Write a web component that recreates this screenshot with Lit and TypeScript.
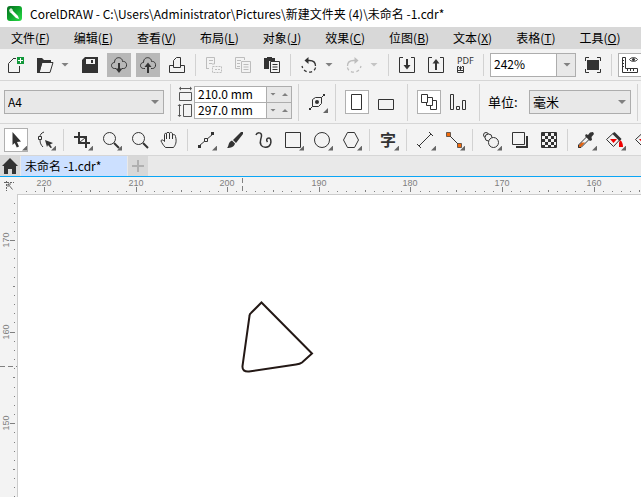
import { LitElement, html, svg, css, nothing, SVGTemplateResult } from "lit";
import { customElement, property, state } from "lit/decorators.js";
import { classMap } from "lit/directives/class-map.js";

const icons: Record<string, SVGTemplateResult> = {
  fresh: svg`<path class="s" d="M9 5.500H12M15.500 13V19.500H4.500V10.500L9.500 5.500"/><rect x="13" y="4" width="7" height="7" fill="#12983a"/><path d="M16.500 5v5M14 7.500h5" stroke="#fff" fill="none"/>`,
  open: svg`<path class="s" d="M6 19.500L9 9.500H20L17 19.500z"/><path class="f" d="M4 5h5l2 2h7v3H9L6.500 20H4z"/>`,
  save: svg`<path class="f" d="M7 4H20V20H4V7z"/><path fill="#f3f3f3" d="M8 6h9v5H8z"/><path class="f" d="M13 7h2v3h-2z"/>`,
  cloudDown: svg`<path class="s" d="M9 15.500H7.500C3.500 15.500 3.500 9.500 7.500 9.500C7.500 3 15.500 3.500 15.500 8.500C20.500 7.500 21 15.500 16.500 15.500H15"/><path class="s w" d="M12 10v8"/><path class="f" d="M8.500 15.500h7L12 20z"/>`,
  cloudUp: svg`<path class="s" d="M9 15.500H7.500C3.500 15.500 3.500 9.500 7.500 9.500C7.500 3 15.500 3.500 15.500 8.500C20.500 7.500 21 15.500 16.500 15.500H15"/><path class="s w" d="M12 13v7"/><path class="f" d="M8.500 14h7L12 9.500z"/>`,
  print: svg`<path class="s" d="M8.500 14.500V7.500L11.500 4.500H15.500V14.500M8.500 12.500H4.500V19.500H19.500V12.500H15.500M8.500 14.500H15.500"/>`,
  cut: svg`<path class="s" d="M4.500 15V4.500H12.500V11H10M7 7.500h4M7 10.500h3M4 15.500h3"/><path class="s" stroke-dasharray="2 1" d="M10.500 13.500H19.500V19.500H10.500zM13 16.500h5"/>`,
  copy: svg`<path class="s" d="M9 15.500H4.500V4.500H13.500V7M6 7.500h4M6 10.500h3M6 13.500h3M10.500 8.500H19.500V19.500H10.500zM12.500 11.500h5M12.500 14h5M12.500 16.500h5"/>`,
  paste: svg`<path class="f" d="M4 5h3V4h5v1h3v3H9v8H4z"/><path class="s" d="M10.500 8.500H19.500V19.500H10.500zM12.500 11.500h5M12.500 14h5M12.500 16.500h5"/>`,
  undo: svg`<path class="s" stroke-width="1.300" d="M9 7.500H12.500C16.500 7.500 18.500 10 18.500 13"/><path class="s" stroke-width="1.300" stroke-dasharray="3 2.500" d="M18.500 14.500C17.500 20.500 7 21.500 5 13"/><path class="f" d="M11.500 4V11L7.500 7.500z"/>`,
  redo: svg`<path class="s" stroke-width="1.300" d="M15 7.500H11.500C7.500 7.500 5.500 10 5.500 13"/><path class="s" stroke-width="1.300" stroke-dasharray="3 2.500" d="M5.500 14.500C6.500 20.500 17 21.500 19 13"/><path class="f" d="M12.500 4V11L16.500 7.500z"/>`,
  bringIn: svg`<path class="s" d="M8 4.500H4.500V19.500H8M16 4.500H19.500V19.500H16M8 19.500H16"/><path class="s w" d="M12 6v8"/><path class="f" d="M8.500 12h7L12 16.500z"/>`,
  sendOut: svg`<path class="s" d="M8 4.500H4.500V19.500H8M16 4.500H19.500V19.500H16M8 19.500H16"/><path class="s w" d="M12 9v8"/><path class="f" d="M8.500 10.500h7L12 6z"/>`,
  pdf: svg`<text class="label" x="4" y="11">PDF</text><path class="s" d="M6 13.500H4.500V19.500H10.500V13.500H9M7.500 14v4M5 17.500h5"/><path class="f" d="M5.500 15.500h4L7.500 13z"/>`,
  full: svg`<path class="f" d="M6 7h12v10H6z"/><path class="s" d="M4.500 8V4.500H8M16 4.500H19.500V8M19.500 16V19.500H16M8 19.500H4.500V16"/>`,
  rulers: svg`<path class="s" d="M4.500 4.500H7.500V15.500H19.500V19.500H4.500zM5 7.500h1M5 10.500h1M5 13.500h1M9.500 18v-2M12.500 18v-2M15.500 18v-2"/><path class="s" d="M11.500 6.500C13 4 18 4 19.500 6.500C18 9 13 9 11.500 6.500z"/><circle class="f" cx="15.500" cy="6.500" r="1.500"/>`,
  nib: svg`<path class="s" d="M4 20L7.500 16.500V9.500L10.500 7.500H16.500V13.500L13.500 16.500H7.500M16.500 7.500L20 4"/><circle class="f" cx="12" cy="12" r="2"/><path class="f" d="M4 18h2v2H4zM18 4h2v2h-2z"/>`,
  portrait: svg`<path class="s" d="M6.500 4.500H16.500V19.500H6.500z"/>`,
  landscape: svg`<path class="s" d="M4.500 9.500H19.500V19.500H4.500z"/>`,
  pages: svg`<path class="s" d="M4.500 4.500H10.500V12.500H4.500zM10.500 7.500H15.500V15.500H9.500V12.500M15.500 10.500H19.500V19.500H13.500V15.500"/>`,
  align: svg`<path class="s" d="M4.500 4.500H7.500V19.500H4.500zM10.500 16.500H13.500V19.500H10.500zM16.500 10.500H19.500V19.500H16.500z"/>`,
  pick: svg`<path class="f" d="M8.500 4L17 13.500L13 14L15 18.500L12.800 19.500L10.700 15L8.500 17z"/>`,
  shape: svg`<path class="s" d="M11 4C8 5 7 7 7 9M7 12C7 15 8 17 10 19"/><path class="s" d="M5.500 8.500h3v3h-3z"/><path class="f" d="M12 12L20 15L17 16.500L19 19.500L17.500 20L15 17L14 19z"/>`,
  crop: svg`<path class="s w" d="M9 4V15H20M4 9H16V20"/><path class="s" d="M9.500 14.500L15.500 9.500"/>`,
  zoom: svg`<circle class="s" cx="10.500" cy="10.500" r="6"/><path class="s w" d="M15 15L20 20"/>`,
  hand: svg`<path class="s" d="M8.500 19.500C6 17 5 15 4 13C4 11.500 6 11.500 7.500 13.500V6.500C7.500 5 9.500 5 9.500 6.500V11V5.500C9.500 4 12.500 4 12.500 5.500V11V5.500C12.500 4 15.500 4 15.500 6V11V8C15.500 6 18.500 6 18.500 8.500C20 14 18.500 17 16.500 19.500z"/>`,
  line: svg`<path class="s" d="M5 18L19 6"/><path class="f" d="M4 17h3v3H4zM17 4h3v3h-3z"/><path class="s paper" d="M10.500 10.500h3v3h-3z"/>`,
  brush: svg`<path class="f" d="M18 4L20 4V6L13 15L10 12zM9 12.500L12 15.500C11 19 8 20 4 20C6 18 5 14 9 12.500z"/>`,
  curl: svg`<path class="s" stroke-width="1.500" d="M4 7C5 4 10 4 9.500 8C9 12 7 14 9 17C11 20.500 17 20 18.500 16C19.500 12.500 18.500 10 17 10C14.500 10 14 12 15.500 14"/>`,
  rect: svg`<path class="s" d="M4.500 4.500H19.500V19.500H4.500z"/>`,
  circle: svg`<circle class="s" cx="12" cy="12" r="7.500"/>`,
  hexagon: svg`<path class="s" d="M8.500 4.500H15.500L19.500 12L15.500 19.500H8.500L4.500 12z"/>`,
  type: svg`<text class="glyph" x="4" y="18">字</text>`,
  dimension: svg`<path class="s" d="M6 18L18 6M4 16L8 20M16 4L20 8"/>`,
  connector: svg`<path class="s" d="M6 6L18 18"/><path fill="#f26a0a" stroke="#333" stroke-width=".7" d="M4.500 4.500h4v4h-4zM15.500 15.500h4v4h-4z"/>`,
  blend: svg`<circle class="s" cx="7" cy="7" r="2.500"/><circle class="s paper" cx="9.500" cy="9.500" r="3.500"/><circle class="s paper" cx="14.500" cy="14.500" r="5"/>`,
  shadow: svg`<path class="f" d="M18 8h2v12H8v-2h10z"/><path class="s" d="M4.500 4.500H16.500V16.500H4.500z"/>`,
  checks: svg`<path class="s" d="M4.500 4.500H19.500V19.500H4.500z"/><path class="f" d="M5 5h3v3H5zM11 5h3v3h-3zM17 5h2v3h-2zM8 8h3v3H8zM14 8h3v3h-3zM5 11h3v3H5zM11 11h3v3h-3zM17 11h2v3h-2zM8 14h3v3H8zM14 14h3v3h-3zM5 17h3v2H5zM11 17h3v2h-3zM17 17h2v2h-2z"/>`,
  dropper: svg`<path fill="#e36312" d="M4 18L7.500 14.500H11L6 20H4z"/><path class="s" d="M13 8.500L4.500 17V19.500H7L15.500 11"/><path class="f" d="M12 6L14 7L16 4.500L19 4L20 6L17.500 9L18 12L16 13L11 8z"/>`,
  fill: svg`<path class="s" d="M3.500 11.500L10.500 5L17 11.500L10.500 18.500z"/><path fill="#f00000" d="M7 11h7L10.500 15z"/><path class="s" stroke-width="3" d="M10.500 5L17.500 12"/><path fill="#f00000" d="M17 12Q20 14 20 19H16V15z"/>`,
};

@customElement("draw-icon")
class DrawIcon extends LitElement {
  @property() name = "";
  static styles = css`
    :host { display: block; width: 24px; height: 24px; }
    svg { display: block; }
    .s { stroke: currentColor; fill: none; }
    .paper { fill: #f3f3f3; }
    .w { stroke-width: 2; }
    .f { fill: currentColor; }
    .label { font: 9px "Noto Sans", sans-serif; fill: currentColor; }
    .glyph { font: 700 16px "Noto Sans CJK SC", sans-serif; fill: currentColor; }
  `;
  render() {
    return html`<svg width="24" height="24" viewBox="0 0 24 24" aria-hidden="true">${icons[this.name] ?? nothing}</svg>`;
  }
}

@customElement("tool-button")
class ToolButton extends LitElement {
  @property() icon = "";
  @property() label = "";
  @property() look = "";
  @property({ type: Boolean }) flyout = false;
  @property({ type: Boolean }) off = false;
  static styles = css`
    :host { display: block; flex: none; }
    button {
      display: block; position: relative; width: 24px; height: 24px; padding: 0;
      border: 0; background: none; color: #333;
    }
    button.pressed { background: #b8b8b8; }
    button.boxed { background: #fff; box-shadow: inset 0 0 0 1px #b0b0b0; }
    button:disabled { color: #bdbdbd; }
    .corner {
      position: absolute; right: 1px; bottom: 1px; width: 5px; height: 5px;
      background: #666; clip-path: polygon(100% 0, 100% 100%, 0 100%);
    }
  `;
  render() {
    return html`<button
      class=${classMap({ pressed: this.look === "pressed", boxed: this.look === "boxed" })}
      aria-label=${this.label} ?disabled=${this.off}
    ><draw-icon name=${this.icon}></draw-icon>${this.flyout ? html`<span class="corner"></span>` : nothing}</button>`;
  }
}

const STEP = 9.16; // screen pixels per millimetre at this zoom level

@customElement("page-ruler")
class PageRuler extends LitElement {
  @property({ type: Boolean }) vertical = false;
  @property({ type: Number }) first = 0; // value of the first major mark
  @property({ type: Number }) start = 0; // where that mark falls
  @property({ type: Number }) pointer = 0;
  @state() private extent = 0;

  private watcher = new ResizeObserver(([entry]) => {
    this.extent = this.vertical ? entry.contentRect.height : entry.contentRect.width;
  });

  static styles = css`
    :host { display: block; overflow: hidden; min-width: 0; min-height: 0; position: relative; background: #f3f3f3; }
    svg { position: absolute; inset: 0; width: 100%; height: 100%; }
    text { font: 9px "Liberation Sans", sans-serif; fill: #808080; text-anchor: middle; }
    rect { fill: #808080; }
    path { stroke: #808080; }
  `;

  connectedCallback() {
    super.connectedCallback();
    this.watcher.observe(this);
  }
  disconnectedCallback() {
    this.watcher.disconnect();
    super.disconnectedCallback();
  }

  render() {
    const marks: SVGTemplateResult[] = [];
    const v = this.vertical;
    const base = 15;
    for (let i = -10; ; i++) {
      const p = Math.round(this.start + i * STEP);
      if (p >= this.extent) break;
      if (p < 8) continue;
      const len = i % 10 === 0 ? 5 : i % 5 === 0 ? 2 : 1;
      marks.push(v
        ? svg`<rect x=${base - len} y=${p} width=${len} height="1"/>`
        : svg`<rect x=${p} y=${base - len} width="1" height=${len}/>`);
      if (i % 10 === 0 && p > 10 && p + 10 < this.extent) {
        const n = this.first - i;
        marks.push(v
          ? svg`<text transform=${`translate(9 ${p}) rotate(-90)`}>${n}</text>`
          : svg`<text x=${p} y="9">${n}</text>`);
      }
    }
    const d = v ? `M0 ${this.pointer}.5H18` : `M${this.pointer}.5 1V18`;
    return html`<svg>${marks}${svg`<path stroke-dasharray="5 3" d=${d}/>`}</svg>`;
  }
}

const menus = [["文件", "F"], ["编辑", "E"], ["查看", "V"], ["布局", "L"], ["对象", "J"], ["效果", "C"], ["位图", "B"], ["文本", "X"], ["表格", "T"], ["工具", "O"]];

type Tool = [icon: string, label: string, flyout?: boolean] | null;
const tools: Tool[] = [
  ["shape", "形状", true], null,
  ["crop", "裁剪", true], ["zoom", "缩放", true], ["zoom", "查找"], ["hand", "平移"], null,
  ["line", "折线", true], ["brush", "艺术笔"], ["curl", "手绘"], ["rect", "矩形", true], ["circle", "椭圆形", true], ["hexagon", "多边形", true], null,
  ["type", "文本", true], null,
  ["dimension", "度量", true], ["connector", "连接器", true], null,
  ["blend", "混合", true], ["shadow", "阴影"], ["checks", "透明度"], null,
  ["dropper", "滴管", true], ["fill", "填充", true], ["fill", "智能填充"],
];

@customElement("app-root")
class AppRoot extends LitElement {
  static styles = css`
    :host {
      display: flex; flex-direction: column; min-height: 100vh; overflow: hidden;
      background: #fff; color: #000;
      font: 12px "Noto Sans CJK SC", "Noto Sans", sans-serif;
    }
    button, input, select { font: inherit; color: inherit; margin: 0; border: 0; border-radius: 0; }
    .title { display: flex; align-items: center; gap: 8px; height: 27px; padding-left: 7px; white-space: nowrap; }
    h1 { margin: 0; font-size: 12px; font-weight: 400; }
    .menu { display: flex; height: 22px; background: #d8d8d8; }
    .menu button { flex: none; padding: 0 13px 2px 11px; text-align: left; background: none; white-space: nowrap; }
    .bar { display: flex; align-items: center; gap: 5px; padding-left: 4px; background: #f3f3f3; border-bottom: 1px solid #d6d6d6; overflow: hidden; }
    .std { height: 31px; }
    .props { height: 42px; }
    .tools { height: 31px; }
    .sep { flex: none; width: 1px; height: 22px; margin: 0 1px; background: #d2d2d2; }
    .props .sep { height: 37px; }
    .split { display: flex; flex: none; }
    .more { width: 16px; height: 24px; padding: 0; background: none; display: grid; place-items: center; }
    .tri { width: 8px; height: 4px; background: #808080; clip-path: polygon(0 0, 100% 0, 50% 100%); }
    .more:disabled .tri { background: #c4c4c4; }
    .combo { position: relative; flex: none; height: 24px; box-sizing: border-box; border: 1px solid #adadad; background: #e8e8e8; }
    .combo select { appearance: none; display: block; width: 100%; height: 22px; padding: 0 20px 2px 3px; background: none; outline: 0; }
    .combo .tri { position: absolute; right: 4px; top: 9px; pointer-events: none; }
    .paper { width: 160px; }
    .units { width: 102px; }
    .units select, .unit-label { font-size: 13px; }
    .level { width: 86px; background: linear-gradient(to left, #e8e8e8 18px, #adadad 18px, #adadad 19px, #fff 19px); }
    .size { display: flex; gap: 1px; flex: none; }
    .size svg { display: block; }
    .fields { display: grid; grid-template-columns: 72px 12px 12px; grid-auto-rows: 15px; gap: 1px 0; padding: 1px; background: #adadad; }
    .fields input { width: 71px; height: 15px; padding: 0 0 1px 3px; box-sizing: border-box; background: #fff; }
    .fields button { padding: 0; background: #e8e8e8; display: grid; place-items: center; }
    .fields .tri { width: 6px; height: 3px; }
    .up { transform: rotate(180deg); }
    .pair { display: flex; gap: 5px; padding: 0 3px; flex: none; }
    .unit-label { width: 36px; padding: 0 0 2px 2px; flex: none; white-space: nowrap; }
    .tabs { display: flex; gap: 1px; height: 20px; background: #e9e9e9; border-bottom: 1px solid #0aa5f5; }
    .tabs button { padding: 0; background: #d8d8d8; }
    .tabs .home { width: 20px; display: grid; place-items: center; color: #333; }
    .tabs .doc { width: 106px; padding: 0 0 2px 4px; text-align: left; background: #cce0ff; white-space: nowrap; }
    .tabs .add { width: 20px; display: grid; place-items: center; }
    .work { flex: 1; display: grid; grid-template: 17px 1fr / 17px 1fr; background: #f3f3f3; }
    .origin { display: block; padding: 0; background: none; }
    .canvas { background: #fff; border: solid #ccc; border-width: 1px 0 0 1px; margin: 0; overflow: hidden; }
    .canvas svg { display: block; }
  `;

  sep() { return html`<span class="sep"></span>`; }
  more(label: string, off = false) {
    return html`<button class="more" aria-label=${label} ?disabled=${off}><span class="tri"></span></button>`;
  }
  tool(icon: string, label: string, look = "", flyout = false, off = false) {
    return html`<tool-button icon=${icon} label=${label} look=${look} ?flyout=${flyout} ?off=${off}></tool-button>`;
  }
  size(label: string, value: string) {
    return html`<input aria-label=${label} .value=${value}>
      <button aria-label="减小${label}"><span class="tri"></span></button>
      <button aria-label="增大${label}"><span class="tri up"></span></button>`;
  }

  render() {
    return html`
      <header class="title">
        <svg width="15" height="15" viewBox="0 0 15 15" aria-hidden="true">
          <defs><linearGradient id="g" x2="1" y2="1"><stop stop-color="#086b20"/><stop offset=".5" stop-color="#0ea52c"/><stop offset="1" stop-color="#2be04a"/></linearGradient></defs>
          <rect width="15" height="15" rx="3" fill="url(#g)"/>
          <path d="M5 4L11 10L12 13L9 12L3 6z" fill="#fff"/><path d="M2 4L4 2L6 4L3 7z" fill="#d5ecd5"/>
        </svg>
        <h1>CorelDRAW - C:\\Users\\Administrator\\Pictures\\新建文件夹 (4)\\未命名 -1.cdr*</h1>
      </header>
      <nav class="menu">${menus.map(([name, key]) => html`<button>${name}(<u>${key}</u>)</button>`)}</nav>

      <div class="bar std">
        ${this.tool("fresh", "新建")}
        <span class="split">${this.tool("open", "打开")}${this.more("最近打开")}</span>
        ${this.tool("save", "保存")}
        ${this.tool("cloudDown", "从云打开", "pressed")}
        ${this.tool("cloudUp", "保存到云", "pressed")}
        ${this.tool("print", "打印")}
        ${this.sep()}
        ${this.tool("cut", "剪切", "", false, true)}
        ${this.tool("copy", "复制", "", false, true)}
        ${this.tool("paste", "粘贴")}
        ${this.sep()}
        <span class="split">${this.tool("undo", "撤消")}${this.more("撤消列表")}</span>
        <span class="split">${this.tool("redo", "重做", "", false, true)}${this.more("重做列表", true)}</span>
        ${this.sep()}
        ${this.tool("bringIn", "导入")}
        ${this.tool("sendOut", "导出")}
        ${this.tool("pdf", "发布为 PDF")}
        ${this.sep()}
        <span class="combo level"><select aria-label="缩放级别"><option>242%</option></select><span class="tri"></span></span>
        ${this.tool("full", "全屏预览")}
        ${this.sep()}
        ${this.tool("rulers", "显示标尺", "boxed")}
      </div>

      <div class="bar props">
        <span class="combo paper"><select aria-label="页面大小"><option>A4</option></select><span class="tri"></span></span>
        ${this.sep()}
        <div class="size">
          <svg width="16" height="33" viewBox="0 0 16 33" fill="none" stroke="#555" aria-hidden="true">
            <path d="M2.500 6.500H14.500V14.500H2.500zM6.500 18.500H14.500V30.500H6.500zM3 2.500H14M2.500 20V30"/>
            <path d="M2 2.500l2-2v4zM15 2.500l-2-2v4zM2.500 18l-2 2h4zM2.500 31l-2-2h4z" fill="#555" stroke="none"/>
          </svg>
          <div class="fields">${this.size("宽度", "210.0 mm")}${this.size("高度", "297.0 mm")}</div>
        </div>
        ${this.sep()}
        ${this.tool("nib", "微调", "", true)}
        ${this.sep()}
        <div class="pair">${this.tool("portrait", "纵向", "boxed")}${this.tool("landscape", "横向")}</div>
        ${this.sep()}
        <div class="pair">${this.tool("pages", "所有页面", "boxed")}${this.tool("align", "当前页面")}</div>
        ${this.sep()}
        <label class="unit-label" for="unit">单位:</label>
        <span class="combo units"><select id="unit"><option>毫米</option></select><span class="tri"></span></span>
        ${this.sep()}
      </div>

      <div class="bar tools">
        ${this.tool("pick", "选择", "boxed", true)}
        ${tools.map((t) => (t ? this.tool(t[0], t[1], "", t[2]) : this.sep()))}
      </div>

      <nav class="tabs">
        <button class="home" aria-label="欢迎屏幕">
          <svg width="16" height="16" viewBox="0 0 16 16" fill="currentColor" aria-hidden="true"><path d="M8 0L16 8H14V16H10V11H6V16H2V8H0z"/></svg>
        </button>
        <button class="doc">未命名 -1.cdr*</button>
        <button class="add" aria-label="新建文档">
          <svg width="12" height="12" viewBox="0 0 12 12" stroke="#b0b0b0" stroke-width="2" aria-hidden="true"><path d="M6 0V12M0 6H12"/></svg>
        </button>
      </nav>

      <main class="work">
        <button class="origin" aria-label="标尺原点">
          <svg width="17" height="17" viewBox="0 0 17 17" stroke="#666" fill="none" aria-hidden="true">
            <path stroke-dasharray="2 1" d="M4 5.500H14M6.500 4V14"/><path d="M8 7L12.500 12.500M8 10V7H11"/>
          </svg>
        </button>
        <page-ruler first="220" start="27" pointer="225"></page-ruler>
        <page-ruler vertical first="170" start="46" pointer="172"></page-ruler>
        <div class="canvas">
          <svg width="400" height="250" role="img" aria-label="三角形" fill="none" stroke="#231815" stroke-width="2">
            <path d="M243.500 107.500L294 158.500L284 167.500Q282 169 278 169.500L231 176.500Q224 177 224.500 171L231.500 121Q231.500 119 233 118z"/>
          </svg>
        </div>
      </main>
    `;
  }
}
